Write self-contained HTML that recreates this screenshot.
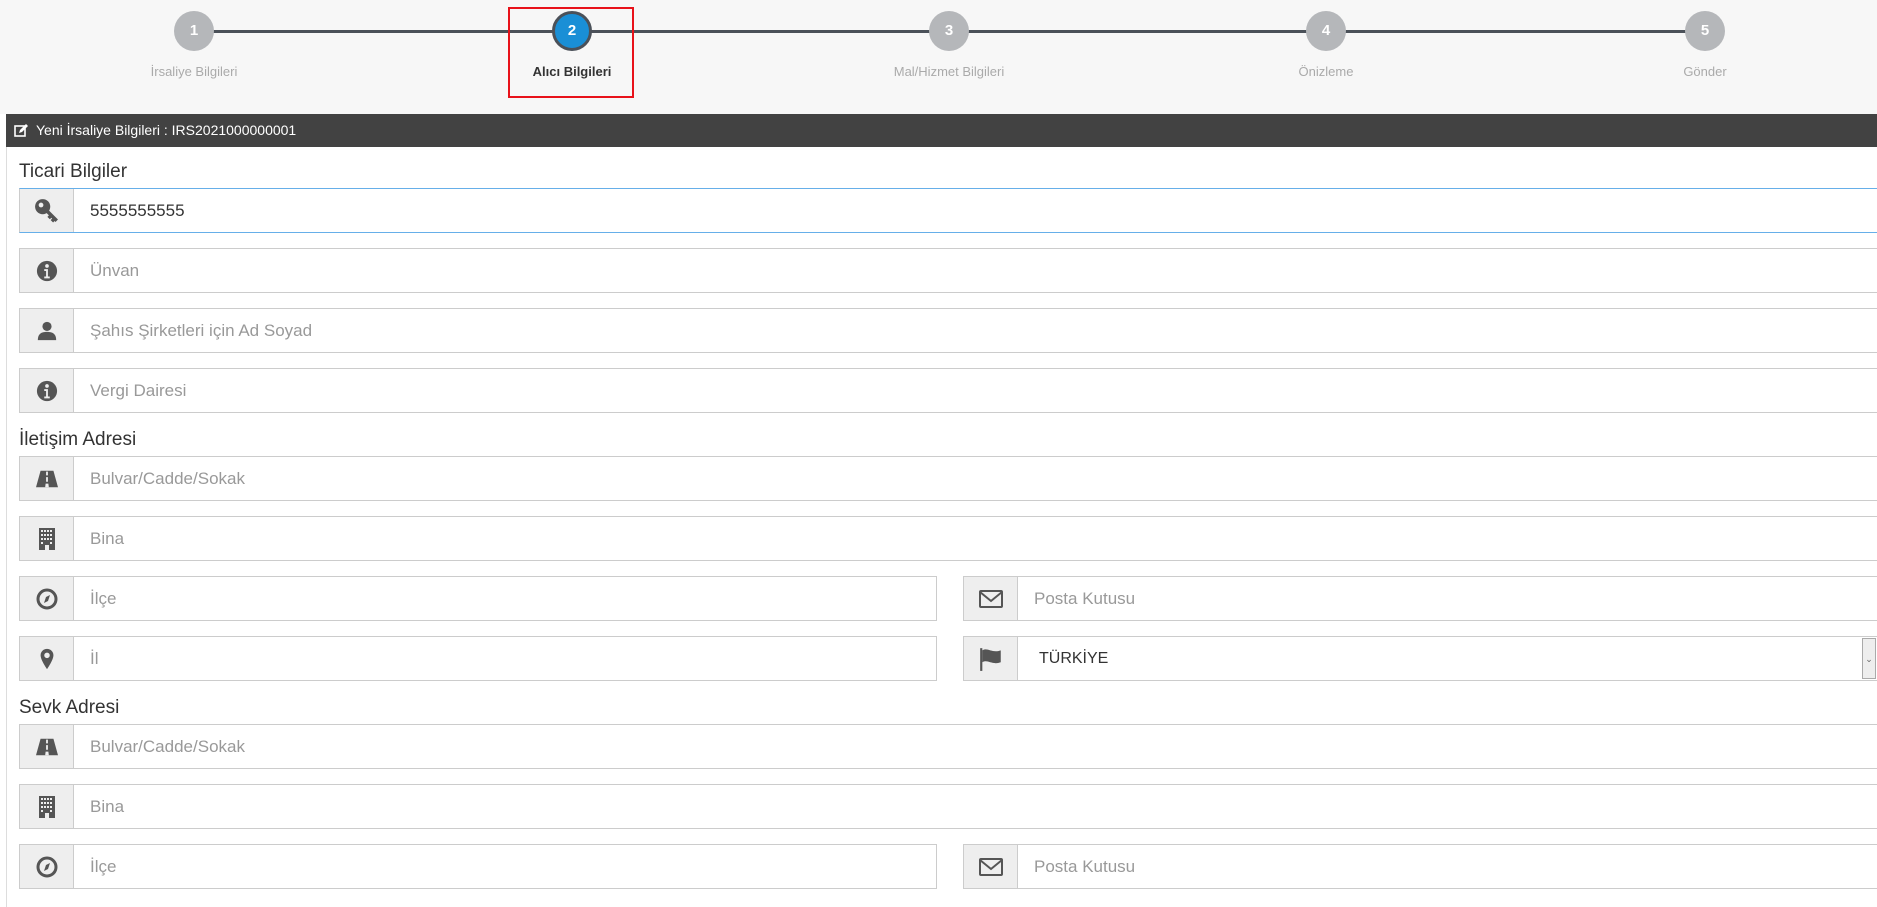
<!DOCTYPE html>
<html><head><meta charset="utf-8"><style>
*{box-sizing:border-box;margin:0;padding:0}
body{width:1877px;height:901px;overflow:hidden;background:#fff;font-family:"Liberation Sans",sans-serif;position:relative}
.top{position:absolute;left:0;top:0;width:1877px;height:114px;background:#f7f7f7}
.line{position:absolute;left:194px;width:1511px;top:30px;height:3px;background:#4b5159}
.c{position:absolute;width:40px;height:40px;border-radius:50%;background:#b5b7ba;color:#fff;font-weight:bold;font-size:15px;text-align:center;line-height:40px;top:11px}
.c.act{background:#1a8fd6;border:3px solid #4b5159;line-height:34px}
.lbl{position:absolute;top:64px;font-size:13px;color:#aaa;width:200px;text-align:center}
.lbl.act{color:#333;font-weight:bold}
.red{position:absolute;left:508px;top:7px;width:126px;height:91px;border:2px solid #e8121a}
.hdr{position:absolute;left:6px;top:114px;width:1871px;height:33px;background:#424242;color:#fff;font-size:14px;line-height:33px;padding-left:30px}
.panel{position:absolute;left:6px;top:147px;width:1871px;height:760px;border-left:1px solid #ddd}
.h{position:absolute;left:19px;font-size:19px;color:#333}
.in{position:absolute;height:45px;border:1px solid #ccc;background:#fff}
.in .a{position:absolute;left:0;top:0;width:54px;height:43px;background:#eee;border-right:1px solid #ccc;display:flex;align-items:center;justify-content:center}
.in .t{position:absolute;left:70px;top:0;line-height:43px;font-size:17px;color:#999}
.in.focus{border-color:#66afe9;border-left-color:#ccc}
</style></head><body>
<div class="top"></div>
<div class="line"></div>
<div class="c" style="left:174px">1</div>
<div class="c act" style="left:552px">2</div>
<div class="c" style="left:929px">3</div>
<div class="c" style="left:1306px">4</div>
<div class="c" style="left:1685px">5</div>
<div class="lbl" style="left:94px">İrsaliye Bilgileri</div>
<div class="lbl act" style="left:472px">Alıcı Bilgileri</div>
<div class="lbl" style="left:849px">Mal/Hizmet Bilgileri</div>
<div class="lbl" style="left:1226px">Önizleme</div>
<div class="lbl" style="left:1605px">Gönder</div>
<div class="red"></div>
<div class="hdr"><svg style="position:absolute;left:8px;top:10px" width="14" height="14" viewBox="0 0 14 14"><rect x="1" y="2" width="10" height="10" fill="none" stroke="#fff" stroke-width="1.6"/><path d="M5 9l1-3 6-6 2 2-6 6z" fill="#fff"/></svg>Yeni İrsaliye Bilgileri : IRS2021000000001</div>
<div class="panel"></div>

<div class="h" style="top:161px">Ticari Bilgiler</div>
<div class="h" style="top:429px">İletişim Adresi</div>
<div class="h" style="top:697px">Sevk Adresi</div>

<svg width="0" height="0" style="position:absolute"><defs>
<symbol id="key" viewBox="0 0 24 24"><circle cx="8" cy="8" r="7" fill="#555"/><circle cx="6.5" cy="6.5" r="2.2" fill="#eee"/><path d="M12 12l9 9M16 16l-2.5 2.5M19 19l-2.5 2.5" stroke="#555" stroke-width="3.2"/></symbol>
<symbol id="info" viewBox="0 0 24 24"><circle cx="12" cy="12" r="11" fill="#555"/><circle cx="12" cy="6.5" r="2" fill="#eee"/><path d="M9 10h4v8h2v2H9v-2h2v-6H9z" fill="#eee"/></symbol>
<symbol id="user" viewBox="0 0 24 24"><circle cx="12" cy="7" r="5" fill="#555"/><path d="M2 22c0-7 4-9 10-9s10 2 10 9z" fill="#555"/></symbol>
<symbol id="road" viewBox="0 0 24 24"><path d="M5 3h14l5 18H0z" fill="#555"/><path d="M11 4h2v4h-2zM11 10h2v5h-2zM10.5 17h3l.5 4h-4z" fill="#eee"/></symbol>
<symbol id="bld" viewBox="0 0 24 24"><rect x="4" y="1" width="16" height="22" fill="#555"/><g fill="#eee"><rect x="6" y="3" width="2" height="2"/><rect x="9" y="3" width="2" height="2"/><rect x="12" y="3" width="2" height="2"/><rect x="15" y="3" width="2" height="2"/><rect x="6" y="7" width="2" height="2"/><rect x="9" y="7" width="2" height="2"/><rect x="12" y="7" width="2" height="2"/><rect x="15" y="7" width="2" height="2"/><rect x="6" y="11" width="2" height="2"/><rect x="9" y="11" width="2" height="2"/><rect x="12" y="11" width="2" height="2"/><rect x="15" y="11" width="2" height="2"/><rect x="6" y="15" width="2" height="2"/><rect x="15" y="15" width="2" height="2"/><rect x="10" y="18" width="4" height="5"/></g></symbol>
<symbol id="comp" viewBox="0 0 24 24"><circle cx="12" cy="12" r="9" fill="none" stroke="#555" stroke-width="3"/><path d="M15 8l-2 6-4 2 2-6z" fill="#555"/></symbol>
<symbol id="pin" viewBox="0 0 24 24"><path d="M12 1a7 7 0 0 0-7 7c0 5 7 15 7 15s7-10 7-15a7 7 0 0 0-7-7z" fill="#555"/><circle cx="12" cy="8" r="3" fill="#eee"/></symbol>
<symbol id="mail" viewBox="0 0 24 24"><rect x="1" y="4" width="22" height="16" rx="1" fill="none" stroke="#555" stroke-width="2"/><path d="M1 5l11 9 11-9" fill="none" stroke="#555" stroke-width="2"/></symbol>
<symbol id="flag" viewBox="0 0 24 24"><rect x="2" y="2" width="2" height="21" fill="#555"/><path d="M4 4c5-3 9 3 17 0v11c-8 3-12-3-17 0z" fill="#555"/></symbol>
</defs></svg>

<div class="in focus" style="left:19px;top:188px;width:1870px"><div class="a"><svg width="26" height="26"><use href="#key"/></svg></div><div class="t" style="color:#333">5555555555</div></div>
<div class="in" style="left:19px;top:248px;width:1870px"><div class="a"><svg width="22" height="22"><use href="#info"/></svg></div><div class="t">Ünvan</div></div>
<div class="in" style="left:19px;top:308px;width:1870px"><div class="a"><svg width="22" height="22"><use href="#user"/></svg></div><div class="t">Şahıs Şirketleri için Ad Soyad</div></div>
<div class="in" style="left:19px;top:368px;width:1870px"><div class="a"><svg width="22" height="22"><use href="#info"/></svg></div><div class="t">Vergi Dairesi</div></div>

<div class="in" style="left:19px;top:456px;width:1870px"><div class="a"><svg width="26" height="22"><use href="#road"/></svg></div><div class="t">Bulvar/Cadde/Sokak</div></div>
<div class="in" style="left:19px;top:516px;width:1870px"><div class="a"><svg width="24" height="26"><use href="#bld"/></svg></div><div class="t">Bina</div></div>
<div class="in" style="left:19px;top:576px;width:918px"><div class="a"><svg width="24" height="24"><use href="#comp"/></svg></div><div class="t">İlçe</div></div>
<div class="in" style="left:19px;top:636px;width:918px"><div class="a"><svg width="22" height="24"><use href="#pin"/></svg></div><div class="t">İl</div></div>
<div class="in" style="left:963px;top:576px;width:926px"><div class="a"><svg width="26" height="24"><use href="#mail"/></svg></div><div class="t">Posta Kutusu</div></div>
<div class="in" style="left:963px;top:636px;width:926px"><div class="a"><svg width="26" height="26"><use href="#flag"/></svg></div><div class="t" style="color:#333;left:75px;font-size:16px">TÜRKİYE</div><div style="position:absolute;left:898px;top:1px;width:14px;height:41px;background:#eee;border:1px solid #aaa;font-size:9px;color:#666;text-align:center;line-height:41px">⌄</div></div>

<div class="in" style="left:19px;top:724px;width:1870px"><div class="a"><svg width="26" height="22"><use href="#road"/></svg></div><div class="t">Bulvar/Cadde/Sokak</div></div>
<div class="in" style="left:19px;top:784px;width:1870px"><div class="a"><svg width="24" height="26"><use href="#bld"/></svg></div><div class="t">Bina</div></div>
<div class="in" style="left:19px;top:844px;width:918px"><div class="a"><svg width="24" height="24"><use href="#comp"/></svg></div><div class="t">İlçe</div></div>
<div class="in" style="left:963px;top:844px;width:926px"><div class="a"><svg width="26" height="24"><use href="#mail"/></svg></div><div class="t">Posta Kutusu</div></div>
</body></html>
